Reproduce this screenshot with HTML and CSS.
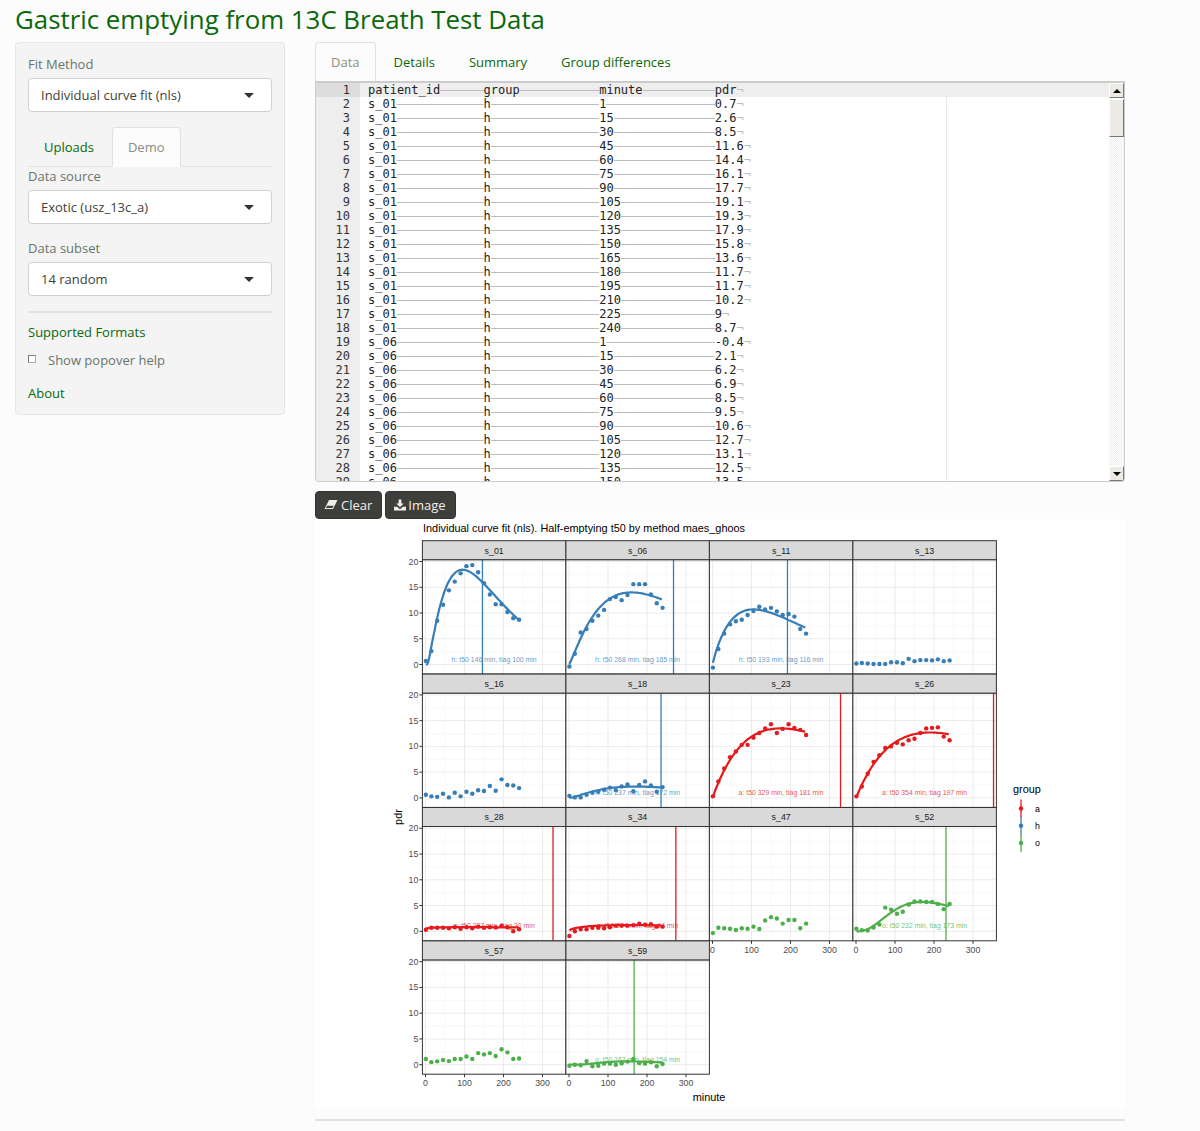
FILE: index.html
```html
<!DOCTYPE html>
<html lang="en">
<head>
    <meta charset="UTF-8">
    <title>Gastric emptying from 13C Breath Test Data</title>
    <link rel="stylesheet" href="styles.css">
</head>
<body>
    <h2 class="page-title">Gastric emptying from 13C Breath Test Data</h2>
    <div class="layout">
        <div class="sidebar">
            <label class="field-label">Fit Method</label>
            <div class="select">Individual curve fit (nls)</div>
            <ul class="tabs side-tabs">
                <li><a>Uploads</a></li>
                <li class="active"><a>Demo</a></li>
            </ul>
            <label class="field-label source-label">Data source</label>
            <div class="select">Exotic (usz_13c_a)</div>
            <label class="field-label subset-label">Data subset</label>
            <div class="select">14 random</div>
            <hr class="side-rule">
            <a class="side-link formats-link">Supported Formats</a>
            <div class="check-row"><span class="check"></span><span>Show popover help</span></div>
            <a class="side-link about-link">About</a>
        </div>
        <div class="main">
            <ul class="tabs main-tabs">
                <li class="active"><a>Data</a></li>
                <li><a>Details</a></li>
                <li><a>Summary</a></li>
                <li><a>Group differences</a></li>
            </ul>
            <div class="editor">
                <div class="gutter">
                    <div class="gutter-active">1</div>
                    <div>2</div><div>3</div><div>4</div><div>5</div><div>6</div><div>7</div><div>8</div><div>9</div><div>10</div>
                    <div>11</div><div>12</div><div>13</div><div>14</div><div>15</div><div>16</div><div>17</div><div>18</div><div>19</div>
                    <div>20</div><div>21</div><div>22</div><div>23</div><div>24</div><div>25</div><div>26</div><div>27</div><div>28</div><div>29</div>
                </div>
                <div class="lines" id="lines">
                    <div class="print-margin"></div>
                </div>
                <div class="scrollbar">
                    <div class="scroll-btn"><span class="arrow-up"></span></div>
                    <div class="scroll-thumb"></div>
                    <div class="scroll-track"></div>
                    <div class="scroll-btn"><span class="arrow-down"></span></div>
                </div>
            </div>
            <div class="buttons">
                <button class="btn">
                    <svg class="btn-icon" viewBox="0 0 15 12" width="15" height="12"><path d="M5 1H13.5L9 10H0.5Z M3.2 6.7L1.8 9.1H8.4L9.7 6.7Z" fill="#eee" fill-rule="evenodd"/></svg>
                    Clear
                </button>
                <button class="btn">
                    <svg class="btn-icon" viewBox="0 0 13 12" width="12" height="12"><path d="M5 0H8V4.5H10.5L6.5 8.5L2.5 4.5H5Z M0 8H3.5L5.5 10H7.5L9.5 8H13V12H0Z" fill="#eee"/></svg>
                    Image
                </button>
            </div>
            <div class="plot" id="plot"></div>
            <hr class="main-rule">
        </div>
    </div>
    <script src="plot.js"></script>
</body>
</html>
```

FILE: styles.css
```css
body {
    margin: 0;
    background: #fcfcfc;
    font-family: "Open Sans", sans-serif;
    font-size: 13px;
    color: #3e3f3a;
}
.page-title {
    margin: 0;
    padding: 2px 15px 0;
    height: 42px;
    box-sizing: border-box;
    font-size: 25.85px;
    font-weight: 400;
    line-height: 35px;
    color: #0a680a;
}
.layout {
    display: flex;
    gap: 30px;
    padding: 0 15px;
    align-items: flex-start;
}

/* sidebar */
.sidebar {
    width: 270px;
    height: 373px;
    box-sizing: border-box;
    padding: 12px 12px 0;
    background: #f4f4f4;
    border: 1px solid #e6e6e6;
    border-radius: 4px;
}
.field-label {
    display: block;
    height: 18px;
    line-height: 18px;
    margin-bottom: 5px;
    color: #68756d;
}
.select {
    position: relative;
    height: 34px;
    box-sizing: border-box;
    padding-left: 12px;
    line-height: 33px;
    background: #fff;
    border: 1px solid #d0d0d0;
    border-radius: 4px;
    color: #3e3f3a;
}
.select::after {
    content: "";
    position: absolute;
    right: 17px;
    top: 14px;
    border-top: 5px solid #333;
    border-left: 5px solid transparent;
    border-right: 5px solid transparent;
}
.tabs {
    display: flex;
    margin: 0;
    padding: 0;
    list-style: none;
    border-bottom: 1px solid #e1e1e1;
}
.tabs li {
    margin-bottom: -1px;
    margin-right: 2px;
}
.tabs a {
    display: block;
    box-sizing: border-box;
    height: 40px;
    padding: 9px 15px 0;
    line-height: 20px;
    border: 1px solid transparent;
    border-radius: 4px 4px 0 0;
    color: #0a680a;
}
.tabs .active a {
    color: #8e8c84;
    background: #fcfcfc;
    border-color: #e1e1e1;
    border-bottom-color: #fcfcfc;
}
.side-tabs {
    margin-top: 15px;
}
.source-label {
    margin-top: 0;
}
.subset-label {
    margin-top: 15px;
}
.side-rule {
    height: 2px;
    margin: 15px 0 10px;
    border: 0;
    background: #e2e2e2;
}
.side-link {
    display: block;
    height: 18px;
    line-height: 18px;
    color: #0a680a;
}
.check-row {
    display: flex;
    align-items: center;
    height: 18px;
    margin-top: 10px;
    color: #68756d;
}
.check {
    width: 6px;
    height: 6px;
    margin-right: 12px;
    margin-top: -3px;
    background: #fff;
    border: 1px solid #777;
    border-right-color: #aaa;
    border-bottom-color: #aaa;
}
.about-link {
    margin-top: 15px;
}

/* main column */
.main {
    width: 810px;
}
.main-tabs {
    border-bottom: 0;
    height: 40px;
}
.editor {
    position: relative;
    display: flex;
    height: 401px;
    margin-top: -1px;
    box-sizing: border-box;
    overflow: hidden;
    background: #fff;
    border: 1px solid #ccc;
    border-top: 2px solid #ccc;
    border-radius: 0 0 4px 4px;
    font-family: "DejaVu Sans Mono", monospace;
    font-size: 12px;
    line-height: 14px;
    color: #222;
}
.gutter {
    flex: none;
    width: 44px;
    background: #eee;
    color: #333;
    text-align: right;
}
.gutter div {
    padding-right: 10px;
}
.gutter .gutter-active {
    background: #dcdcdc;
}
.lines {
    position: relative;
    flex: 1;
    overflow: hidden;
}
.print-margin {
    position: absolute;
    left: 586px;
    top: 0;
    bottom: 0;
    width: 1px;
    background: #e8e8e8;
}
.line {
    position: relative;
    display: grid;
    grid-template-columns: repeat(3, 16ch) auto;
    justify-content: start;
    height: 14px;
    padding-left: 8px;
}
.line-active {
    background: #eee;
}
.cell {
    display: flex;
    align-items: center;
    white-space: pre;
}
.leader {
    flex: 1;
    height: 1px;
    background: #bdbdbd;
}
.eol {
    color: #bdbdbd;
}
.scrollbar {
    flex: none;
    display: flex;
    flex-direction: column;
    width: 15px;
    background: #fff;
}
.scroll-btn {
    display: flex;
    align-items: center;
    justify-content: center;
    flex: none;
    height: 15px;
    box-sizing: border-box;
    background: #edeae5;
    border: 1px solid;
    border-color: #fff #777 #777 #fff;
}
.arrow-up {
    border-bottom: 4px solid #000;
    border-left: 4px solid transparent;
    border-right: 4px solid transparent;
}
.arrow-down {
    border-top: 4px solid #000;
    border-left: 4px solid transparent;
    border-right: 4px solid transparent;
}
.scroll-thumb {
    flex: none;
    height: 38px;
    margin-top: 1px;
    box-sizing: border-box;
    background: #edeae5;
    border: 1px solid;
    border-color: #fff #777 #777 #fff;
}
.scroll-track {
    flex: 1;
    background: repeating-conic-gradient(#eeeeee 0 25%, #fff 0 50%) 0 0 / 2px 2px;
}
.buttons {
    display: flex;
    gap: 3px;
    height: 28px;
    margin-top: 9px;
}
.btn {
    display: flex;
    align-items: center;
    gap: 2px;
    height: 28px;
    padding: 0 9px 0 8px;
    background: #3e3f3a;
    border: 1px solid #333;
    border-radius: 4px;
    font-family: "Open Sans", sans-serif;
    font-size: 13px;
    color: #eee;
}
.plot {
    height: 590px;
    background: #fff;
}
.plot svg {
    display: block;
    font-family: "Liberation Sans", sans-serif;
}
.main-rule {
    height: 2px;
    margin: 10px 0 0;
    border: 0;
    background: #e0e0e0;
}
```

FILE: plot.js
```js
// table shown in the Data tab
const table = [
    ['s_01', 'h', 1, 0.7], ['s_01', 'h', 15, 2.6], ['s_01', 'h', 30, 8.5], ['s_01', 'h', 45, 11.6],
    ['s_01', 'h', 60, 14.4], ['s_01', 'h', 75, 16.1], ['s_01', 'h', 90, 17.7], ['s_01', 'h', 105, 19.1],
    ['s_01', 'h', 120, 19.3], ['s_01', 'h', 135, 17.9], ['s_01', 'h', 150, 15.8], ['s_01', 'h', 165, 13.6],
    ['s_01', 'h', 180, 11.7], ['s_01', 'h', 195, 11.7], ['s_01', 'h', 210, 10.2], ['s_01', 'h', 225, 9],
    ['s_01', 'h', 240, 8.7],
    ['s_06', 'h', 1, -0.4], ['s_06', 'h', 15, 2.1], ['s_06', 'h', 30, 6.2], ['s_06', 'h', 45, 6.9],
    ['s_06', 'h', 60, 8.5], ['s_06', 'h', 75, 9.5], ['s_06', 'h', 90, 10.6], ['s_06', 'h', 105, 12.7],
    ['s_06', 'h', 120, 13.1], ['s_06', 'h', 135, 12.5], ['s_06', 'h', 150, 13.5]
];

function addLine(parent, cells, active) {
    const line = document.createElement('div');
    line.className = active ? 'line line-active' : 'line';
    cells.forEach((text, i) => {
        const cell = document.createElement('div');
        cell.className = 'cell';
        cell.textContent = text;
        const mark = document.createElement('span');
        if (i < 3) {
            mark.className = 'leader';
        } else {
            mark.className = 'eol';
            mark.textContent = '¬';
        }
        cell.appendChild(mark);
        line.appendChild(cell);
    });
    parent.appendChild(line);
}

const lines = document.getElementById('lines');
addLine(lines, ['patient_id', 'group', 'minute', 'pdr'], true);
table.forEach(row => addLine(lines, row.map(String), false));

// facets: name, group, pdr values at the 17 minutes, curve [peak, peak time, beta, lag],
// t50, tlag, nudge of the t50 line in pixels
const minutes = [1, 15, 30, 45, 60, 75, 90, 105, 120, 135, 150, 165, 180, 195, 210, 225, 240];
const colors = { a: '#e41a1c', h: '#377eb8', o: '#4daf4a' };
const panels = [
    ['s_01', 'h', [0.7, 2.6, 8.5, 11.6, 14.4, 16.1, 17.7, 19.1, 19.3, 17.9, 15.8, 13.6, 11.7, 11.7, 10.2, 9, 8.7], [18.4, 90, 2.3, 5], 146, 100],
    ['s_06', 'h', [-0.4, 2.1, 6.2, 6.9, 8.5, 9.5, 10.6, 12.7, 13.1, 12.5, 13.5, 15.6, 15.6, 15.6, 13.6, 11.9, 11], [14, 160, 2.2], 268, 165],
    ['s_11', 'h', [-0.6, 3, 6, 7.8, 8.4, 8.7, 9.6, 10.4, 11.2, 10.7, 11, 10.3, 9.6, 9.8, 9.3, 6.9, 6], [10.7, 105, 1.95], 193, 116, -0.3],
    ['s_13', 'h', [0.2, 0.3, 0.2, 0.1, 0.1, 0.1, 0.45, 0.45, 0.25, 1.1, 0.65, 0.85, 0.85, 0.8, 1, 0.65, 0.8]],
    ['s_16', 'h', [0.6, 0.3, 0.2, 0.8, 0.1, 1, 0.3, 1.2, 0.8, 1.5, 1.35, 2.3, 1.4, 3.6, 2.5, 2.4, 1.9]],
    ['s_18', 'h', [0.4, 0.1, 0.1, 0.6, 1, 1.2, 1.6, 2, 1.5, 2.2, 2.6, 1.3, 2.5, 3.2, 2.4, 1.2, 2.1], [2.2, 170, 2.5], 237, 172, -0.4],
    ['s_23', 'a', [0.3, 3.2, 5.7, 7.9, 9, 10.3, 10.3, 11.7, 12.6, 13.5, 14.3, 12.6, 13.4, 14.3, 13.6, 13.2, 12.2], [13.5, 175, 2], 329, 181, -0.3],
    ['s_26', 'a', [0.3, 2.2, 4.7, 7, 8.3, 9.7, 10, 10.7, 10.4, 11.2, 11.5, 12.6, 13.5, 13.6, 13.7, 11.9, 11.2], [12.7, 190, 2], 354, 197, -0.5],
    ['s_28', 'a', [0.3, 0.7, 0.7, 0.7, 0.6, 0.8, 0.5, 0.8, 0.6, 0.9, 0.7, 0.8, 0.75, 1.1, 0.8, 0, 0.4], [0.8, 110, 1.15], 327, 30],
    ['s_34', 'a', [-0.9, 0, 0.4, 0.4, 0.7, 0.7, 0.6, 0.8, 1.1, 1.1, 1.1, 1.2, 1.5, 1.3, 1.4, 0.9, 0.9], [1.2, 150, 1.5], 274, 64],
    ['s_47', 'o', [-0.35, 0.7, 0.6, 0.5, 0.25, 0.6, 0.5, 0.9, 0.45, 2.1, 2.75, 2.5, 1.5, 2.2, 2.2, 0.6, 1.5]],
    ['s_52', 'o', [0.5, 0.2, 0.15, 0.75, 1.3, 4.6, 4.2, 3.4, 3.8, 5.2, 5.8, 5.8, 5.7, 5.7, 5.3, 4.3, 5.3], [5.7, 170, 4], 232, 173, -0.5],
    ['s_57', 'o', [1.1, 0.5, 0.65, 0.9, 0.7, 1.1, 1.1, 1.6, 1.1, 2.25, 2, 2.25, 1.7, 3, 2.4, 1.1, 1.2]],
    ['s_59', 'o', [-0.2, 0, -0.1, 0.7, -0.3, -0.2, 0.2, 0.2, 0, 0.25, 0.6, 1.1, 0.3, 0.2, 0.5, -0.3, 0.15], [0.65, 150, 5], 167, 154]
];

const NS = 'http://www.w3.org/2000/svg';
const svg = document.createElementNS(NS, 'svg');
svg.setAttribute('width', 810);
svg.setAttribute('height', 590);
svg.setAttribute('viewBox', '315 519 810 590');
document.getElementById('plot').appendChild(svg);

function el(name, attrs, text) {
    const node = document.createElementNS(NS, name);
    for (const key in attrs) node.setAttribute(key, attrs[key]);
    if (text !== undefined) node.textContent = text;
    svg.appendChild(node);
    return node;
}

function label(x, y, text, size, fill, anchor) {
    return el('text', { x: x, y: y, 'font-size': size, fill: fill, 'text-anchor': anchor || 'middle' }, text);
}

const PANEL_W = 143.5, PANEL_H = 114.3, STRIP_H = 19, ROW_STEP = 133.4;
const LEFT = 422.4, TOP = 540.7;
const PX_MIN = 0.39, PX_PDR = 5.15;

function curveValue(t, c) {
    const k = Math.log(c[2]) / c[1];
    const g = x => Math.pow(1 - Math.exp(-k * x), c[2] - 1) * Math.exp(-k * x);
    return c[0] * g(Math.max(t - (c[3] || 0), 0)) / g(c[1]);
}

label(423, 532, 'Individual curve fit (nls). Half-emptying t50 by method maes_ghoos', 10.9, '#000', 'start');

panels.forEach((p, i) => {
    const col = i % 4, row = Math.floor(i / 4);
    const px = LEFT + col * PANEL_W;
    const sy = TOP + row * ROW_STEP;
    const py = sy + STRIP_H;
    const x0 = px + 3.1;
    const y0 = sy + 123.8;
    const X = m => x0 + m * PX_MIN;
    const Y = v => y0 - v * PX_PDR;
    const color = colors[p[1]];

    el('rect', { x: px, y: py, width: PANEL_W, height: PANEL_H, fill: '#fff' });

    // grid, minor then major
    for (let v = 2.5; v < 20; v += 5) {
        el('line', { x1: px, x2: px + PANEL_W, y1: Y(v), y2: Y(v), stroke: '#f0f0f0', 'stroke-width': 0.5 });
    }
    for (let m = 50; m < 360; m += 100) {
        el('line', { x1: X(m), x2: X(m), y1: py, y2: py + PANEL_H, stroke: '#f0f0f0', 'stroke-width': 0.5 });
    }
    for (let v = 0; v <= 20; v += 5) {
        el('line', { x1: px, x2: px + PANEL_W, y1: Y(v), y2: Y(v), stroke: '#ebebeb', 'stroke-width': 1 });
    }
    for (let m = 0; m <= 300; m += 100) {
        el('line', { x1: X(m), x2: X(m), y1: py, y2: py + PANEL_H, stroke: '#ebebeb', 'stroke-width': 1 });
    }

    p[2].forEach((v, j) => {
        el('circle', { cx: X(minutes[j]), cy: Y(v), r: 2.2, fill: color });
    });

    if (p[3]) {
        let d = '';
        for (let t = 1; t <= 240; t += 3) {
            d += (d ? 'L' : 'M') + X(t).toFixed(1) + ' ' + Y(curveValue(t, p[3])).toFixed(1);
        }
        el('path', { d: d, fill: 'none', stroke: color, 'stroke-width': 2.2 });
        const lineX = X(p[4]) + (p[6] || 0);
        el('line', { x1: lineX, x2: lineX, y1: py, y2: py + PANEL_H, stroke: color, 'stroke-width': 1.3 });
        const note = label(X(176), y0 - 3, p[1] + ': t50 ' + p[4] + ' min, tlag ' + p[5] + ' min', 6.9, color);
        note.setAttribute('fill-opacity', 0.8);
    }

    el('rect', { x: px, y: py, width: PANEL_W, height: PANEL_H, fill: 'none', stroke: '#333', 'stroke-width': 1 });
    el('rect', { x: px, y: sy, width: PANEL_W, height: STRIP_H, fill: '#d9d9d9', stroke: '#333', 'stroke-width': 1 });
    label(px + PANEL_W / 2, sy + 12.8, p[0], 8.8, '#1a1a1a');

    // y axis on the first column, x axis under the last panel of each column
    if (col === 0) {
        for (let v = 0; v <= 20; v += 5) {
            el('line', { x1: px - 3, x2: px, y1: Y(v), y2: Y(v), stroke: '#333', 'stroke-width': 1 });
            label(px - 4, Y(v) + 3, v, 8.8, '#4d4d4d', 'end');
        }
    }
    if (i + 4 >= panels.length) {
        for (let m = 0; m <= 300; m += 100) {
            el('line', { x1: X(m), x2: X(m), y1: py + PANEL_H, y2: py + PANEL_H + 3, stroke: '#333', 'stroke-width': 1 });
            label(X(m), py + PANEL_H + 12, m, 8.8, '#4d4d4d');
        }
    }
});

label(709, 1101, 'minute', 10.9, '#000');
const yTitle = label(0, 0, 'pdr', 10.9, '#000');
yTitle.setAttribute('transform', 'translate(402,817) rotate(-90)');

// legend
label(1013, 793, 'group', 10.9, '#000', 'start');
[['a', 808.5], ['h', 825.8], ['o', 843]].forEach(k => {
    const color = colors[k[0]];
    el('line', { x1: 1021, x2: 1021, y1: k[1] - 9, y2: k[1] + 9, stroke: color, 'stroke-width': 1.3 });
    el('circle', { cx: 1021, cy: k[1], r: 2.2, fill: color });
    label(1035, k[1] + 3, k[0], 8.8, '#000', 'start');
});
```
